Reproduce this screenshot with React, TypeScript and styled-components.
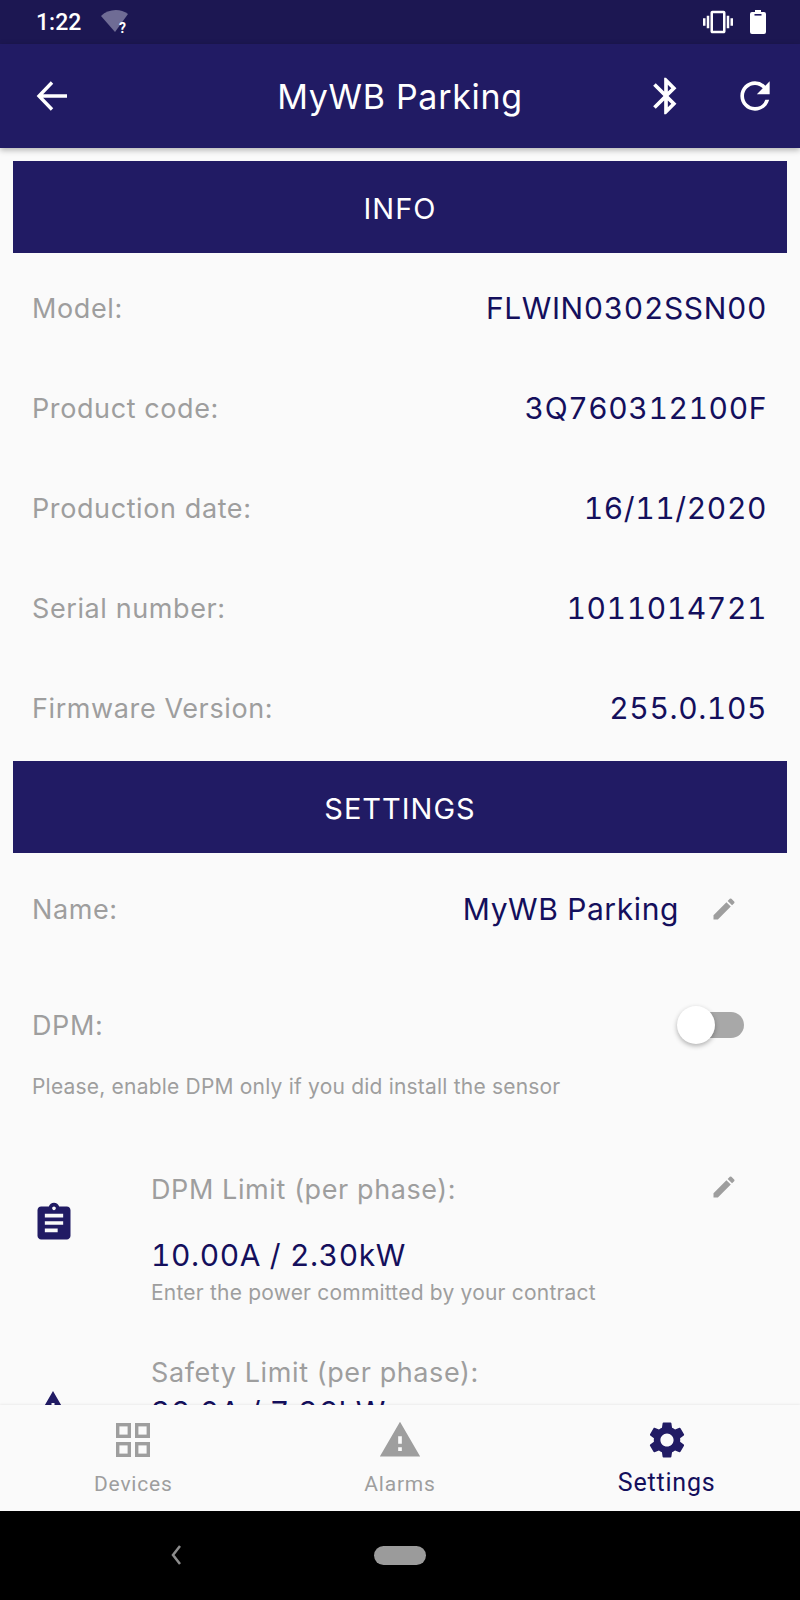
import React from "react";
import styled, { createGlobalStyle } from "styled-components";
import {
  MdBluetooth,
  MdRefresh,
  MdEdit,
  MdAssignment,
  MdSettings,
  MdWarning,
  MdVibration,
} from "react-icons/md";

const NAVY = "#211b64";
const INK = "#140f5c";
const GREY = "#9e9e9e";

const GlobalStyle = createGlobalStyle`
  html, body {
    margin: 0;
    padding: 0;
    background: #fafafa;
  }
  * {
    box-sizing: border-box;
  }
`;

const infoRows = [
  { label: "Model:", value: "FLWIN0302SSN00" },
  { label: "Product code:", value: "3Q760312100F" },
  { label: "Production date:", value: "16/11/2020" },
  { label: "Serial number:", value: "1011014721" },
  { label: "Firmware Version:", value: "255.0.105" },
];

export default function App() {
  return (
    <Screen>
      <GlobalStyle />
      <StatusBar>
        <StatusLeft>
          <Clock>1:22</Clock>
          <WifiIcon />
        </StatusLeft>
        <StatusRight>
          <MdVibration size={30} />
          <BatteryIcon />
        </StatusRight>
      </StatusBar>

      <Header>
        <BackIcon />
        <Title>MyWB Parking</Title>
        <HeaderActions>
          <MdBluetooth size={44} />
          <MdRefresh size={44} />
        </HeaderActions>
      </Header>

      <Content>
        <SectionBar>INFO</SectionBar>
        <InfoList>
          {infoRows.map((row) => (
            <InfoRow key={row.label}>
              <Label>{row.label}</Label>
              <Value>{row.value}</Value>
            </InfoRow>
          ))}
        </InfoList>

        <SectionBar>SETTINGS</SectionBar>

        <NameRow>
          <Label>Name:</Label>
          <NameValue>MyWB Parking</NameValue>
          <EditIcon />
        </NameRow>

        <DpmRow>
          <Label>DPM:</Label>
          <Switch>
            <Knob />
          </Switch>
        </DpmRow>
        <Note>Please, enable DPM only if you did install the sensor</Note>

        <LimitRow>
          <LimitIcon>
            <MdAssignment size={44} />
          </LimitIcon>
          <LimitBody>
            <LimitHead>
              <Label>DPM Limit (per phase):</Label>
              <EditIcon />
            </LimitHead>
            <LimitValue>10.00A / 2.30kW</LimitValue>
            <Note>Enter the power committed by your contract</Note>
          </LimitBody>
        </LimitRow>

        <SafetyRow>
          <SafetyIcon>
            <MdWarning size={36} />
          </SafetyIcon>
          <LimitBody>
            <Label>Safety Limit (per phase):</Label>
            <SafetyValue>32.0A / 7.36kW</SafetyValue>
          </LimitBody>
        </SafetyRow>
      </Content>

      <BottomNav>
        <NavItem>
          <NavIcon>
            <GridIcon />
          </NavIcon>
          <NavLabel>Devices</NavLabel>
        </NavItem>
        <NavItem>
          <NavIcon>
            <MdWarning size={44} />
          </NavIcon>
          <NavLabel>Alarms</NavLabel>
        </NavItem>
        <NavItem $active>
          <NavIcon>
            <MdSettings size={44} />
          </NavIcon>
          <NavLabel $active>Settings</NavLabel>
        </NavItem>
      </BottomNav>

      <SystemBar>
        <SystemBack viewBox="0 0 12 24">
          <path d="M10 3 L3 12 L10 21" />
        </SystemBack>
        <HomePill />
      </SystemBar>
    </Screen>
  );
}

function WifiIcon() {
  return (
    <WifiSvg viewBox="0 0 30 26">
      <path d="M1 7 C8 0 20 -1 28 5 L15 23 Z" fill="#6f6c95" />
      <text x="19" y="24" fontSize="14" fontWeight="700" fill="#fff" fontFamily="Roboto, sans-serif">
        ?
      </text>
    </WifiSvg>
  );
}

function BatteryIcon() {
  return (
    <svg width="16" height="24" viewBox="0 0 16 24">
      <path d="M5 0 h6 v2 h3 a2 2 0 0 1 2 2 v18 a2 2 0 0 1 -2 2 h-12 a2 2 0 0 1 -2 -2 v-18 a2 2 0 0 1 2 -2 h3 z" fill="#fff" />
      <rect x="4.5" y="4" width="7" height="1.6" fill={NAVY} />
    </svg>
  );
}

function BackIcon() {
  return (
    <svg width="32" height="30" viewBox="0 0 32 30" fill="none" stroke="#fff" strokeWidth="3.4">
      <path d="M31 15 H3 M16 1.5 L3 15 L16 28.5" />
    </svg>
  );
}

function EditIcon() {
  return (
    <PencilWrap>
      <MdEdit size={28} />
    </PencilWrap>
  );
}

function GridIcon() {
  return (
    <GridSvg viewBox="0 0 34 34" fill="none" stroke={GREY} strokeWidth="3.4">
      <rect x="1.7" y="1.7" width="11.6" height="11.6" />
      <rect x="20.7" y="1.7" width="11.6" height="11.6" />
      <rect x="1.7" y="20.7" width="11.6" height="11.6" />
      <rect x="20.7" y="20.7" width="11.6" height="11.6" />
    </GridSvg>
  );
}

const Screen = styled.div`
  width: 800px;
  height: 1600px;
  display: flex;
  flex-direction: column;
  overflow: hidden;
  background: #fafafa;
  font-family: "Inter", "Roboto", sans-serif;
`;

const StatusBar = styled.div`
  height: 44px;
  flex: none;
  display: flex;
  align-items: center;
  justify-content: space-between;
  padding: 0 34px 0 36px;
  background: #1c1752;
  color: #fff;
`;

const StatusLeft = styled.div`
  display: flex;
  align-items: center;
  gap: 19px;
`;

const StatusRight = styled.div`
  display: flex;
  align-items: center;
  gap: 17px;
`;

const Clock = styled.span`
  font-family: "Roboto", sans-serif;
  font-size: 23px;
  font-weight: 500;
`;

const WifiSvg = styled.svg`
  width: 30px;
  height: 26px;
`;

const Header = styled.header`
  position: relative;
  z-index: 2;
  height: 104px;
  flex: none;
  display: flex;
  align-items: center;
  justify-content: space-between;
  padding: 0 23px 0 36px;
  background: ${NAVY};
  color: #fff;
  box-shadow: 0 2px 6px rgba(0, 0, 0, 0.3);
`;

const Title = styled.h1`
  position: absolute;
  left: 0;
  right: 0;
  margin: 0;
  text-align: center;
  font-size: 34px;
  font-weight: 400;
  letter-spacing: 0.7px;
`;

const HeaderActions = styled.div`
  display: flex;
  align-items: center;
  gap: 45px;
`;

const Content = styled.main`
  flex: 1;
  min-height: 0;
  overflow: hidden;
  padding: 13px 13px 0;
`;

const SectionBar = styled.div`
  height: 92px;
  padding-top: 3px;
  display: flex;
  align-items: center;
  justify-content: center;
  background: ${NAVY};
  color: #fff;
  font-size: 29px;
  letter-spacing: 1px;
`;

const InfoList = styled.div`
  display: flex;
  flex-direction: column;
  padding: 5px 20px 3px 19px;
`;

const InfoRow = styled.div`
  height: 100px;
  display: flex;
  align-items: center;
  justify-content: space-between;
`;

const Label = styled.span`
  font-size: 27px;
  color: ${GREY};
  letter-spacing: 0.6px;
`;

const Value = styled.span`
  font-size: 30px;
  color: ${INK};
  letter-spacing: 0.6px;
  font-variant-numeric: tabular-nums;
`;

const NameRow = styled.div`
  height: 112px;
  margin-bottom: 11px;
  display: flex;
  align-items: center;
  padding: 0 49px 0 19px;
`;

const NameValue = styled(Value)`
  margin-left: auto;
  margin-right: 31px;
`;

const PencilWrap = styled.span`
  display: flex;
  color: ${GREY};
`;

const DpmRow = styled.div`
  height: 98px;
  display: flex;
  align-items: center;
  justify-content: space-between;
  padding: 0 43px 0 19px;
`;

const Switch = styled.div`
  position: relative;
  width: 58px;
  height: 26px;
  border-radius: 13px;
  background: #a8a8a8;
`;

const Knob = styled.div`
  position: absolute;
  left: -9px;
  top: -6px;
  width: 38px;
  height: 38px;
  border-radius: 50%;
  background: #fff;
  box-shadow: 0 2px 5px rgba(0, 0, 0, 0.3);
`;

const Note = styled.p`
  margin: 0 0 0 19px;
  font-size: 21px;
  color: ${GREY};
  letter-spacing: 0.2px;
`;

const LimitRow = styled.div`
  display: flex;
  align-items: flex-start;
  margin-top: 74px;
  padding-left: 19px;
`;

const LimitIcon = styled.div`
  flex: none;
  width: 119px;
  margin-top: 28px;
  display: flex;
  color: ${NAVY};
`;

const SafetyIcon = styled(LimitIcon)`
  margin-top: 32px;
  padding-left: 3px;
`;

const LimitBody = styled.div`
  flex: 1;
  display: flex;
  flex-direction: column;
  & > ${Note} {
    margin-left: 0;
  }
`;

const LimitHead = styled.div`
  display: flex;
  align-items: flex-start;
  justify-content: space-between;
  padding-right: 49px;
`;

const LimitValue = styled(Value)`
  margin-top: 31px;
  margin-bottom: 7px;
`;

const SafetyRow = styled.div`
  display: flex;
  margin-top: 51px;
  padding-left: 19px;
`;

const SafetyValue = styled(Value)`
  margin-top: 5px;
`;

const BottomNav = styled.nav`
  position: relative;
  z-index: 2;
  height: 106px;
  flex: none;
  display: grid;
  grid-template-columns: repeat(3, 1fr);
  background: #fafafa;
  box-shadow: 0 -1px 2px rgba(0, 0, 0, 0.06);
`;

const NavItem = styled.div<{ $active?: boolean }>`
  display: flex;
  flex-direction: column;
  align-items: center;
  padding-top: 8px;
  color: ${(p) => (p.$active ? NAVY : GREY)};
`;

const NavIcon = styled.div`
  height: 54px;
  display: flex;
  align-items: center;
  justify-content: center;
`;

const GridSvg = styled.svg`
  width: 34px;
  height: 34px;
`;

const NavLabel = styled.span<{ $active?: boolean }>`
  margin-top: ${(p) => (p.$active ? 1 : 5)}px;
  font-family: "Roboto", sans-serif;
  font-size: ${(p) => (p.$active ? 25 : 21)}px;
  color: ${(p) => (p.$active ? INK : GREY)};
  letter-spacing: 0.8px;
`;

const SystemBar = styled.div`
  height: 89px;
  flex: none;
  position: relative;
  display: flex;
  align-items: center;
  justify-content: center;
  background: #000;
`;

const SystemBack = styled.svg`
  position: absolute;
  left: 168px;
  top: 32px;
  width: 16px;
  height: 24px;
  fill: none;
  stroke: #8c8c8c;
  stroke-width: 2.5;
`;

const HomePill = styled.div`
  width: 52px;
  height: 19px;
  border-radius: 10px;
  background: #9b9b9b;
`;
